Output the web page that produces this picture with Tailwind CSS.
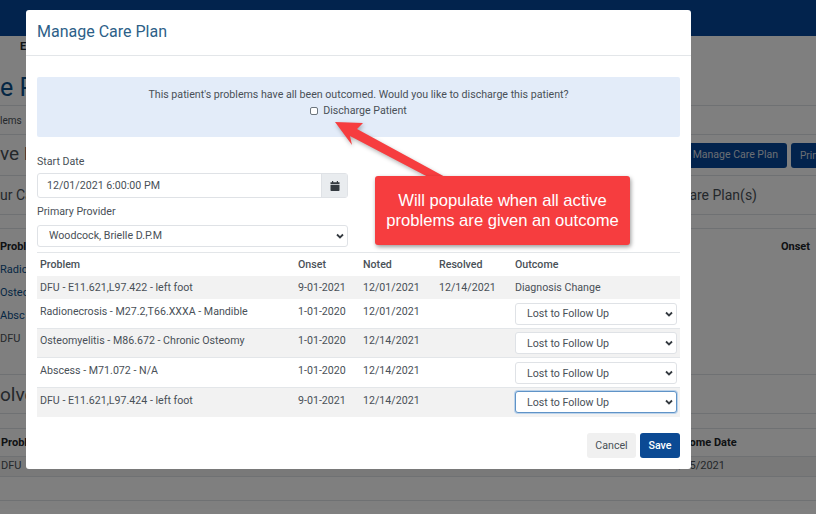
<!DOCTYPE html>
<html lang="en">
<head>
    <meta charset="UTF-8">
    <title>Manage Care Plan</title>
    <script src="https://cdn.jsdelivr.net/npm/@tailwindcss/browser@4"></script>
</head>
<body class="relative w-[816px] h-[514px] overflow-hidden bg-white font-['Roboto',sans-serif] text-[#212529]">
    <!-- page behind the modal -->
    <div class="h-[36px] bg-[#04479a]"></div>
    <div class="h-[34px] pt-[3px] pl-[20px] text-[11px] font-bold">E</div>
    <div class="h-[36px] border-b border-[#dee2e6] text-[25px] leading-[36px] text-[#0b4f8a]">e P</div>
    <div class="h-[29px] border-b border-[#dee2e6] pt-[7px] text-[10px] text-[#495057]">lems</div>
    <div class="h-[41px] border-b border-[#dee2e6] flex items-center justify-between">
        <span class="text-[19px] text-[#495057] mt-[-1px]">ve P</span>
        <div class="flex gap-[4px]">
            <button class="w-[101px] h-[25px] bg-[#04479a] rounded-[3px] text-[10.5px] text-[#d5dce6] text-right pr-[9px]">Manage Care Plan</button>
            <button class="w-[25px] h-[25px] bg-[#04479a] rounded-l-[3px] text-[10px] text-[#d5dce6] text-left pl-[9px]">Prin</button>
        </div>
    </div>
    <div class="h-[39px] border-b border-[#dee2e6] flex items-center justify-between text-[14px] text-[#495057]">
        <span>ur Ca</span>
        <span class="mr-[59px]">Care Plan(s)</span>
    </div>
    <div class="h-[14px] border-b border-[#dee2e6]"></div>
    <div class="h-[29px] pt-[10px] pr-[6px] flex justify-between text-[11px] font-bold">
        <span>Probl</span>
        <span>Onset</span>
    </div>
    <div class="h-[117px] border-b border-[#dee2e6] text-[11px] leading-[23px]">
        <div class="text-[#0b4f8a]">Radic</div>
        <div class="text-[#0b4f8a]">Osteo</div>
        <div class="text-[#0b4f8a]">Absc</div>
        <div class="text-[#495057]">DFU</div>
    </div>
    <div class="h-[39px] border-b border-[#dee2e6] text-[19px] leading-[40px] text-[#495057]">olve</div>
    <div class="h-[15px] border-b border-[#dee2e6]"></div>
    <div class="h-[27px] pt-[6px] pl-[1px] flex text-[11px] font-bold">
        <span>Probl</span>
        <span class="ml-[639px]">Outcome Date</span>
    </div>
    <div class="h-[21px] bg-[#f2f2f2] border-y border-[#dee2e6] pl-[1px] flex items-center text-[11px] text-[#495057]">
        <span>DFU</span>
        <span class="ml-[645px]">12/15/2021</span>
    </div>
    <div class="h-[24px] border-b border-[#dee2e6]"></div>

    <!-- backdrop -->
    <div class="absolute inset-0 bg-black/50"></div>

    <!-- modal -->
    <div class="absolute left-[26px] top-[10px] w-[665px] h-[459px] bg-white rounded-[3px] text-[10.65px] text-[#495057]">
        <div class="h-[46px] border-b border-[#e3e6e9] pl-[11px] pt-[11px] text-[16px] leading-[22px] text-[#2d5f88]">Manage Care Plan</div>
        <div class="px-[11px] pt-[21px]">
            <div class="h-[60px] bg-[#e3ecf9] rounded-[2px] pt-[10px] text-center leading-[16px]">
                <p>This patient's problems have all been outcomed. Would you like to discharge this patient?</p>
                <label class="flex items-center justify-center gap-[5px]">
                    <span class="w-[8px] h-[8px] border border-[#6c757d] rounded-[2px] bg-white"></span>
                    <span>Discharge Patient</span>
                </label>
            </div>

            <div class="mt-[18px] leading-[14px]">Start Date</div>
            <div class="mt-[4px] w-[311px] h-[25px] flex border border-[#dfe2e6] rounded-[3px]">
                <div class="flex-1 pl-[9px] leading-[23px]">12/01/2021 6:00:00 PM</div>
                <div class="w-[26px] bg-[#e9ecef] border-l border-[#dfe2e6] flex items-center justify-center">
                    <svg class="w-[10px] h-[10px]" viewBox="0 0 10 10" fill="#343a40">
                        <path d="M2 0h1.2v1.2h3.6V0H8v1.2h1.5V3H.5V1.2H2zM.5 3.8h9v5.4a.8.8 0 0 1-.8.8H1.3a.8.8 0 0 1-.8-.8z"/>
                    </svg>
                </div>
            </div>
            <div class="mt-[7px] leading-[14px]">Primary Provider</div>
            <div class="relative mt-[6px] w-[311px] h-[22px]">
                <select class="w-full h-full appearance-none border border-[#dfe2e6] rounded-[3px] pl-[11px] bg-white">
                    <option>Woodcock, Brielle D.P.M</option>
                </select>
                <svg class="absolute right-[4px] top-[7px] w-[8px] h-[8px]" viewBox="0 0 8 8" fill="none" stroke="#343a40" stroke-width="1.8">
                    <path d="M1 2.5l3 3 3-3"/>
                </svg>
            </div>

            <table class="mt-[5px] w-[643px] table-fixed border-t border-[#e3e6e9] text-left">
                <colgroup>
                    <col class="w-[258px]">
                    <col class="w-[65px]">
                    <col class="w-[76px]">
                    <col class="w-[76px]">
                    <col>
                </colgroup>
                <thead>
                    <tr class="h-[23px] font-medium">
                        <th class="pl-[3px] pt-[2px] font-medium">Problem</th>
                        <th class="pl-[3px] pt-[2px] font-medium">Onset</th>
                        <th class="pl-[3px] pt-[2px] font-medium">Noted</th>
                        <th class="pl-[3px] pt-[2px] font-medium">Resolved</th>
                        <th class="pl-[3px] pt-[2px] font-medium">Outcome</th>
                    </tr>
                </thead>
                <tbody>
                    <tr class="h-[23px] bg-[#f2f2f2]">
                        <td class="pl-[3px] pt-[2px]">DFU - E11.621,L97.422 - left foot</td>
                        <td class="pl-[3px] pt-[2px]">9-01-2021</td>
                        <td class="pl-[3px] pt-[2px]">12/01/2021</td>
                        <td class="pl-[3px] pt-[2px]">12/14/2021</td>
                        <td class="pl-[3px] pt-[2px]">Diagnosis Change</td>
                    </tr>
                    <tr class="h-[30px] align-top">
                        <td class="pl-[3px] pt-[5px]">Radionecrosis - M27.2,T66.XXXA - Mandible</td>
                        <td class="pl-[3px] pt-[5px]">1-01-2020</td>
                        <td class="pl-[3px] pt-[5px]">12/01/2021</td>
                        <td></td>
                        <td class="pl-[3px] pt-[4px]">
                            <div class="relative w-[162px] h-[22px]">
                                <select class="w-full h-full appearance-none border border-[#dfe2e6] rounded-[3px] pl-[11px] pt-[1px] bg-white"><option>Lost to Follow Up</option></select>
                                <svg class="absolute right-[4px] top-[7px] w-[8px] h-[8px]" viewBox="0 0 8 8" fill="none" stroke="#343a40" stroke-width="1.8"><path d="M1 2.5l3 3 3-3"/></svg>
                            </div>
                        </td>
                    </tr>
                    <tr class="h-[29px] align-top bg-[#f2f2f2] border-t border-[#e3e6e9]">
                        <td class="pl-[3px] pt-[4px]">Osteomyelitis - M86.672 - Chronic Osteomy</td>
                        <td class="pl-[3px] pt-[4px]">1-01-2020</td>
                        <td class="pl-[3px] pt-[4px]">12/14/2021</td>
                        <td></td>
                        <td class="pl-[3px] pt-[3px]">
                            <div class="relative w-[162px] h-[22px]">
                                <select class="w-full h-full appearance-none border border-[#dfe2e6] rounded-[3px] pl-[11px] pt-[1px] bg-white"><option>Lost to Follow Up</option></select>
                                <svg class="absolute right-[4px] top-[7px] w-[8px] h-[8px]" viewBox="0 0 8 8" fill="none" stroke="#343a40" stroke-width="1.8"><path d="M1 2.5l3 3 3-3"/></svg>
                            </div>
                        </td>
                    </tr>
                    <tr class="h-[30px] align-top border-t border-[#e3e6e9]">
                        <td class="pl-[3px] pt-[5px]">Abscess - M71.072 - N/A</td>
                        <td class="pl-[3px] pt-[5px]">1-01-2020</td>
                        <td class="pl-[3px] pt-[5px]">12/14/2021</td>
                        <td></td>
                        <td class="pl-[3px] pt-[4px]">
                            <div class="relative w-[162px] h-[22px]">
                                <select class="w-full h-full appearance-none border border-[#dfe2e6] rounded-[3px] pl-[11px] pt-[1px] bg-white"><option>Lost to Follow Up</option></select>
                                <svg class="absolute right-[4px] top-[7px] w-[8px] h-[8px]" viewBox="0 0 8 8" fill="none" stroke="#343a40" stroke-width="1.8"><path d="M1 2.5l3 3 3-3"/></svg>
                            </div>
                        </td>
                    </tr>
                    <tr class="h-[29px] align-top bg-[#f2f2f2] border-t border-[#e3e6e9]">
                        <td class="pl-[3px] pt-[5px]">DFU - E11.621,L97.424 - left foot</td>
                        <td class="pl-[3px] pt-[5px]">9-01-2021</td>
                        <td class="pl-[3px] pt-[5px]">12/14/2021</td>
                        <td></td>
                        <td class="pl-[3px] pt-[3px]">
                            <div class="relative w-[162px] h-[22px]">
                                <select class="w-full h-full appearance-none border border-[#5f93c7] rounded-[3px] pl-[11px] pt-[1px] bg-white shadow-[0_0_0_1px_#bcd3ea]"><option>Lost to Follow Up</option></select>
                                <svg class="absolute right-[4px] top-[7px] w-[8px] h-[8px]" viewBox="0 0 8 8" fill="none" stroke="#343a40" stroke-width="1.8"><path d="M1 2.5l3 3 3-3"/></svg>
                            </div>
                        </td>
                    </tr>
                </tbody>
            </table>

            <div class="mt-[16px] flex justify-end gap-[4px]">
                <button class="w-[49px] h-[25px] pt-[2px] bg-[#f0f0f0] rounded-[3px]">Cancel</button>
                <button class="w-[40px] h-[25px] pt-[2px] bg-[#0b4a94] rounded-[3px] text-white font-medium">Save</button>
            </div>
        </div>
    </div>

    <!-- annotation laid over the screenshot -->
    <svg class="absolute left-0 top-0 w-[816px] h-[514px] drop-shadow-[1px_2px_2px_rgba(0,0,0,0.3)]" viewBox="0 0 816 514" fill="#f63d3f">
        <polygon points="335,122 363,123 357,129 447,178 430,178 350,136 352,145"/>
    </svg>
    <div class="absolute left-[375px] top-[176px] w-[255px] h-[69px] bg-[#f63d3f] rounded-[3px] shadow-[1px_2px_4px_rgba(0,0,0,0.4)] flex items-center justify-center text-center font-['Liberation_Sans',sans-serif] text-[16.6px] leading-[20px] text-white">
        Will populate when all active<br>problems are given an outcome
    </div>
</body>
</html>
